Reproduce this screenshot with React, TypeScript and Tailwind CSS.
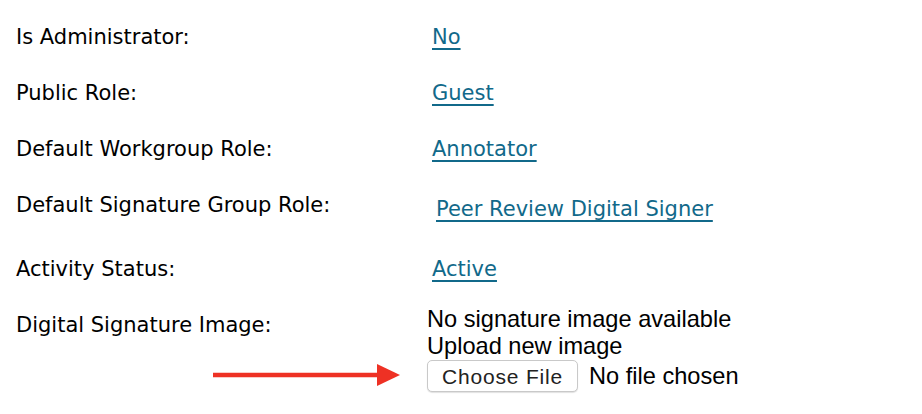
import React from 'react';

const labelFont = { fontFamily: '"DejaVu Sans", Verdana, sans-serif' };
const plainFont = { fontFamily: '"Liberation Sans", Arial, sans-serif' };

interface RowProps {
  label: string;
  value: React.ReactNode;
  height: string;
  valueOffset?: string;
}

function Row({ label, value, height, valueOffset = '' }: RowProps) {
  return (
    <div className={`grid grid-cols-[416px_1fr] items-start ${height}`}>
      <div className="text-[21px] leading-[28px] text-black" style={labelFont}>
        {label}
      </div>
      <div className={valueOffset}>{value}</div>
    </div>
  );
}

function ValueLink({ children }: { children: React.ReactNode }) {
  return (
    <a
      href="#"
      className="text-[21px] leading-[28px] text-[#11698a] underline decoration-2 underline-offset-[4px]"
      style={labelFont}
    >
      {children}
    </a>
  );
}

function RedArrow() {
  return (
    <svg
      className="absolute left-[213px] top-[363px]"
      width="188"
      height="24"
      viewBox="0 0 188 24"
    >
      <line x1="0" y1="12" x2="166" y2="12" stroke="#ee3124" strokeWidth="4.5" />
      <polygon points="164,1 187,12 164,23" fill="#ee3124" />
    </svg>
  );
}

export default function App() {
  return (
    <div className="relative w-[922px] h-[414px] bg-white overflow-hidden px-[16px] pt-[23px]">
      <Row label="Is Administrator:" value={<ValueLink>No</ValueLink>} height="h-[56px]" />
      <Row label="Public Role:" value={<ValueLink>Guest</ValueLink>} height="h-[56px]" />
      <Row label="Default Workgroup Role:" value={<ValueLink>Annotator</ValueLink>} height="h-[56px]" />
      <Row
        label="Default Signature Group Role:"
        value={<ValueLink>Peer Review Digital Signer</ValueLink>}
        height="h-[64px]"
        valueOffset="mt-[4px] ml-[4px]"
      />
      <Row label="Activity Status:" value={<ValueLink>Active</ValueLink>} height="h-[56px]" />
      <div className="grid grid-cols-[416px_1fr] items-start">
        <div className="text-[21px] leading-[28px] text-black" style={labelFont}>
          Digital Signature Image:
        </div>
        <div className="-mt-[5px] -ml-[5px] text-[23.6px] leading-[27px] text-black" style={plainFont}>
          <div>No signature image available</div>
          <div>Upload new image</div>
          <div className="flex items-center gap-[11px]">
            <button
              type="button"
              className="h-[32px] w-[151px] rounded-[5px] border border-[#c9c9c9] bg-white text-[21px] leading-none tracking-[0.8px] text-[#222] shadow-[0_1px_1px_rgba(0,0,0,0.12)]"
              style={plainFont}
            >
              Choose File
            </button>
            <span>No file chosen</span>
          </div>
        </div>
      </div>
      <RedArrow />
    </div>
  );
}
